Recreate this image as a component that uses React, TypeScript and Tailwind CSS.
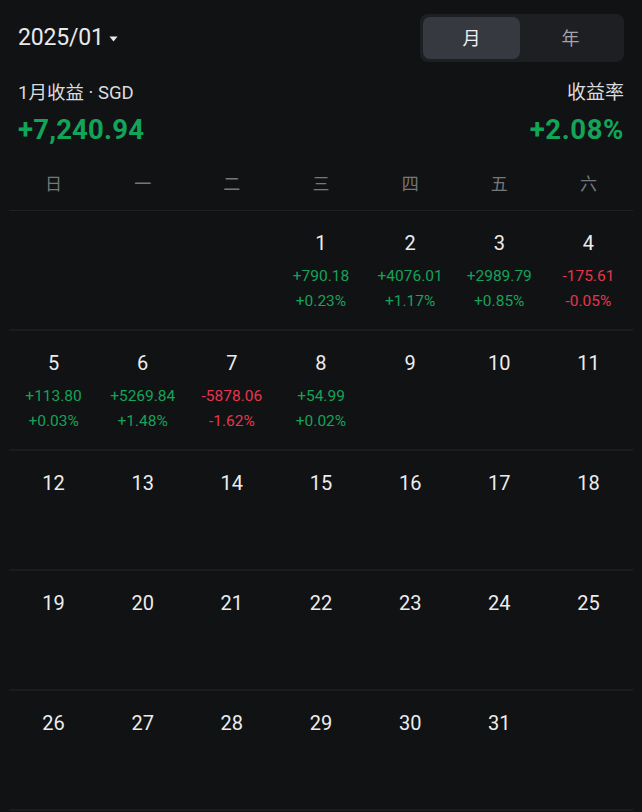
import React from "react";

type Cell = { d?: number; v?: string; p?: string; neg?: boolean };

const data: Record<number, { v: string; p: string; neg?: boolean }> = {
  1: { v: "+790.18", p: "+0.23%" },
  2: { v: "+4076.01", p: "+1.17%" },
  3: { v: "+2989.79", p: "+0.85%" },
  4: { v: "-175.61", p: "-0.05%", neg: true },
  5: { v: "+113.80", p: "+0.03%" },
  6: { v: "+5269.84", p: "+1.48%" },
  7: { v: "-5878.06", p: "-1.62%", neg: true },
  8: { v: "+54.99", p: "+0.02%" },
};

const weekdays = ["日", "一", "二", "三", "四", "五", "六"];

function buildRows(): Cell[][] {
  const cells: Cell[] = [];
  for (let i = 0; i < 3; i++) cells.push({});
  for (let d = 1; d <= 31; d++) {
    const x = data[d];
    cells.push({ d, v: x?.v, p: x?.p, neg: x?.neg });
  }
  while (cells.length % 7) cells.push({});
  const rows: Cell[][] = [];
  for (let i = 0; i < cells.length; i += 7) rows.push(cells.slice(i, i + 7));
  return rows;
}

export default function App() {
  const rows = buildRows();
  const font = { fontFamily: 'Roboto, "Noto Sans CJK SC", sans-serif' };
  return (
    <div className="min-h-[812px] w-full bg-[#111214] text-[#e9e9ea]" style={font}>
      <div className="flex items-center justify-between pl-[18px] pr-[18px] pt-[14px]">
        <div className="flex items-center gap-[5px]">
          <span className="text-[23px] leading-[48px] tracking-[-0.2px]">2025/01</span>
          <svg width="9" height="6" viewBox="0 0 9 6" className="mt-[1px]">
            <path d="M0.5 0.5 L8.5 0.5 L4.5 5.5 Z" fill="#e9e9ea" />
          </svg>
        </div>
        <div className="flex h-[48px] w-[204px] items-center rounded-[8px] bg-[#1d1f23] p-[3px]">
          <div className="flex h-[42px] w-[97px] items-center justify-center rounded-[7px] bg-[#363940] text-[18px] text-[#f0f0f0]">
            月
          </div>
          <div className="flex h-[42px] flex-1 items-center justify-center text-[18px] text-[#a3a5a9]">
            年
          </div>
        </div>
      </div>
      <div className="mt-[19px] flex items-center justify-between px-[18px]">
        <span className="text-[18.5px] leading-[24px] text-[#dcdcdd]">1月收益 · SGD</span>
        <span className="text-[19px] leading-[24px] text-[#dcdcdd]">收益率</span>
      </div>
      <div className="mt-[10px] flex items-center justify-between pl-[18px] pr-[18px]">
        <span className="text-[27.5px] font-bold leading-[30px] tracking-[0.2px] text-[#12a55a]">+7,240.94</span>
        <span className="text-[27.5px] font-bold leading-[30px] tracking-[0.6px] text-[#12a55a]">+2.08%</span>
      </div>
      <div className="mx-[9px] mt-[15px]">
        <div className="grid h-[51px] grid-cols-7 items-center border-b border-[#1f2125]">
          {weekdays.map((w) => (
            <div key={w} className="text-center text-[17px] text-[#75777b]">
              {w}
            </div>
          ))}
        </div>
        {rows.map((r, i) => (
          <div key={i} className="grid h-[120px] grid-cols-7 border-b-[2px] border-[#1a1c20]">
            {r.map((c, j) => (
              <div key={j} className="flex flex-col items-center pt-[19px]">
                {c.d !== undefined && (
                  <>
                    <span className="text-[20px] leading-[26px] text-[#ececed]">{c.d}</span>
                    {c.v && (
                      <>
                        <span
                          className={`mt-[10px] text-[15.5px] leading-[20px] ${
                            c.neg ? "text-[#e5364f]" : "text-[#15a259]"
                          }`}
                        >
                          {c.v}
                        </span>
                        <span
                          className={`mt-[5px] text-[15.5px] leading-[20px] ${
                            c.neg ? "text-[#e5364f]" : "text-[#15a259]"
                          }`}
                        >
                          {c.p}
                        </span>
                      </>
                    )}
                  </>
                )}
              </div>
            ))}
          </div>
        ))}
      </div>
    </div>
  );
}
